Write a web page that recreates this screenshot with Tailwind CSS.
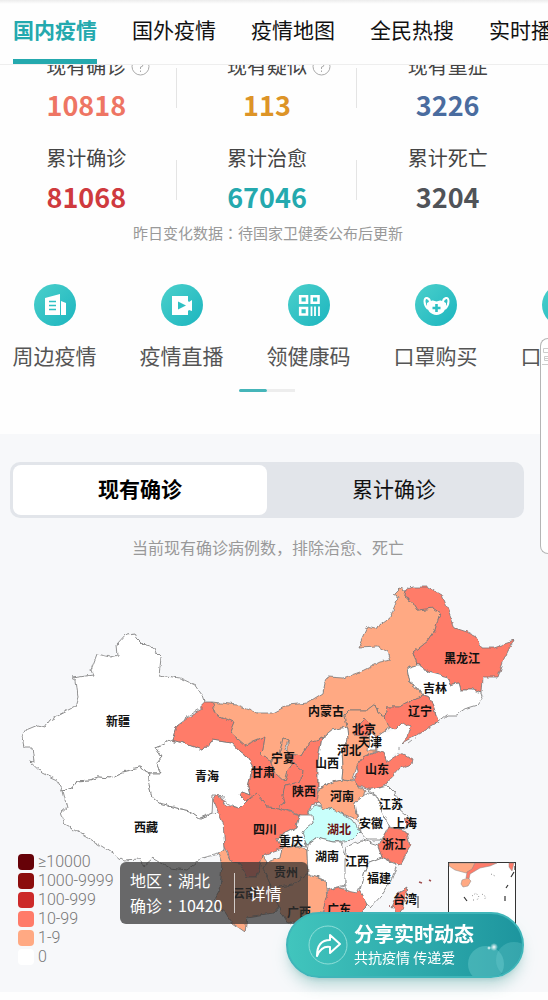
<!DOCTYPE html>
<html lang="zh-CN">

<head>
    <meta charset="UTF-8">
    <meta name="viewport" content="width=device-width, initial-scale=1.0">
    <title>国内疫情</title>
    <script src="https://cdn.jsdelivr.net/npm/@tailwindcss/browser@4"></script>
</head>

<body class="relative min-h-screen overflow-x-hidden bg-[#fefefe] font-['Noto_Sans_CJK_SC',sans-serif]">

    <!-- top tabs -->
    <header class="relative z-10 overflow-hidden border-b border-[#eeeeee] bg-[#fefefe]">
        <div class="h-1 bg-linear-to-b from-[#ececec] to-[#fefefe]"></div>
        <nav class="flex gap-[35px] whitespace-nowrap pl-[13px] text-[21px] text-[#111111]">
            <a href="#" class="flex h-[60px] items-center border-b-[5px] border-[#24a9ae] pb-1 font-bold text-[#24a9ae]">国内疫情</a>
            <a href="#" class="flex h-[60px] items-center pb-[9px]">国外疫情</a>
            <a href="#" class="flex h-[60px] items-center pb-[9px]">疫情地图</a>
            <a href="#" class="flex h-[60px] items-center pb-[9px]">全民热搜</a>
            <a href="#" class="flex h-[60px] items-center pb-[9px]">实时播报</a>
        </nav>
    </header>

    <main>
        <!-- numbers -->
        <section class="-mt-[13px]">
            <div class="-ml-1 mr-[10px] grid grid-cols-3 gap-y-5 text-center text-[20px] text-[#444444]">
                <div class="flex h-[72px] flex-col items-center">
                    <div class="relative leading-7">现有确诊
                        <svg class="absolute -right-6 top-[5px] size-[19px]" viewBox="0 0 19 19" fill="none" stroke="#aaaaaa"><circle cx="9.5" cy="9.5" r="8.5" /><path d="M7 7.500a2.500 2.500 0 1 1 2.500 2.500v2M9.500 13.500v1.500" /></svg>
                    </div>
                    <div class="text-[27px] font-bold leading-[50px] text-[#ee7563]">10818</div>
                </div>
                <div class="relative flex h-[72px] flex-col items-center">
                    <div class="absolute -left-px top-4 h-10 w-px bg-[#e4e4e4]"></div>
                    <div class="relative leading-7">现有疑似
                        <svg class="absolute -right-6 top-[5px] size-[19px]" viewBox="0 0 19 19" fill="none" stroke="#aaaaaa"><circle cx="9.5" cy="9.5" r="8.5" /><path d="M7 7.500a2.500 2.500 0 1 1 2.500 2.500v2M9.500 13.500v1.500" /></svg>
                    </div>
                    <div class="text-[27px] font-bold leading-[50px] text-[#dd9427]">113</div>
                </div>
                <div class="relative flex h-[72px] flex-col items-center">
                    <div class="absolute -left-px top-4 h-10 w-px bg-[#e4e4e4]"></div>
                    <div class="leading-7">现有重症</div>
                    <div class="text-[27px] font-bold leading-[50px] text-[#4a6c9f]">3226</div>
                </div>
                <div class="flex h-[72px] flex-col items-center">
                    <div class="leading-7">累计确诊</div>
                    <div class="text-[27px] font-bold leading-[50px] text-[#cf3a3e]">81068</div>
                </div>
                <div class="relative flex h-[72px] flex-col items-center">
                    <div class="absolute -left-px top-4 h-10 w-px bg-[#e4e4e4]"></div>
                    <div class="leading-7">累计治愈</div>
                    <div class="text-[27px] font-bold leading-[50px] text-[#24a9ae]">67046</div>
                </div>
                <div class="relative flex h-[72px] flex-col items-center">
                    <div class="absolute -left-px top-4 h-10 w-px bg-[#e4e4e4]"></div>
                    <div class="leading-7">累计死亡</div>
                    <div class="text-[27px] font-bold leading-[50px] text-[#505358]">3204</div>
                </div>
            </div>
            <p class="mr-3 mt-[5px] text-center text-[15px] leading-6 text-[#999999]">昨日变化数据<span class="font-['Noto_Sans_CJK_TC',sans-serif]" lang="zh-TW">：</span>待国家卫健委公布后更新</p>
        </section>

        <!-- shortcuts -->
        <section class="mt-[39px] overflow-hidden">
            <div class="flex gap-[42px] whitespace-nowrap pl-3 text-[21px] text-[#555555]">
                <a href="#" class="flex w-[85px] shrink-0 flex-col items-center gap-[13px]">
                    <svg class="size-[42px]" viewBox="0 0 42 42">
                        <defs>
                            <linearGradient id="teal" x1="0" y1="0" x2="1" y2="1">
                                <stop offset="0" stop-color="#4bd0cb" />
                                <stop offset="1" stop-color="#1cb5bf" />
                            </linearGradient>
                        </defs>
                        <circle cx="21" cy="21" r="21" fill="url(#teal)" />
                        <path d="M11 14l15-4v21H11zM27 17l5 2v12h-5z" fill="#fff" />
                        <path d="M15 17.500h7M15 21.500h7M15 25.500h7" stroke="#2fc0c3" stroke-width="1.500" />
                    </svg>
                    <span class="leading-8">周边疫情</span>
                </a>
                <a href="#" class="flex w-[85px] shrink-0 flex-col items-center gap-[13px]">
                    <svg class="size-[42px]" viewBox="0 0 42 42">
                        <circle cx="21" cy="21" r="21" fill="url(#teal)" />
                        <path d="M11 12h16v5l1 1 3-2v11l-3-1-1 1v4H11z" fill="#fff" />
                        <path d="M17 17.500l8 4-8 4z" fill="#2fc0c3" />
                    </svg>
                    <span class="leading-8">疫情直播</span>
                </a>
                <a href="#" class="flex w-[85px] shrink-0 flex-col items-center gap-[13px]">
                    <svg class="size-[42px]" viewBox="0 0 42 42" fill="none" stroke="#fff">
                        <circle cx="21" cy="21" r="21" fill="url(#teal)" stroke="none" />
                        <path d="M12.200 12.200h6.800v6.500h-6.800zM23.700 12.200h6.800v6.500h-6.800zM12.200 24h6.800v6.500h-6.800z" stroke-width="2.600" />
                        <path d="M23.500 22.500v9.500M27 22.500v9.500M31 22.500v9.500" stroke-width="1.800" />
                    </svg>
                    <span class="leading-8">领健康码</span>
                </a>
                <a href="#" class="flex w-[85px] shrink-0 flex-col items-center gap-[13px]">
                    <svg class="size-[42px]" viewBox="0 0 42 42">
                        <circle cx="21" cy="21" r="21" fill="url(#teal)" />
                        <path d="M13 25c-5-5-4-12-1-11 3 1 3 3 3 4M30 25c5-5 4-12 1-11-3 1-3 3-3 4" fill="none" stroke="#fff" stroke-width="2" />
                        <path d="M12 19q4-3 6-2.500l3.500 1 3.500-1q2-.5 6 2.500c1 7-4 12-9.500 12S11 26 12 19z" fill="#fff" />
                        <path d="M21.500 20v8M17.500 24h8" stroke="#2fc0c3" stroke-width="2.600" />
                    </svg>
                    <span class="leading-8">口罩购买</span>
                </a>
                <a href="#" class="flex w-[85px] shrink-0 flex-col items-center gap-[13px]">
                    <svg class="size-[42px]" viewBox="0 0 42 42"><circle cx="21" cy="21" r="21" fill="url(#teal)" /></svg>
                    <span class="leading-8">口罩预约</span>
                </a>
            </div>
            <div class="mr-[14px] mt-[18px] flex justify-center">
                <span class="h-[3px] w-7 rounded-full bg-[#45b5b9]"></span>
                <span class="h-[3px] w-7 bg-[#ededed]"></span>
            </div>
        </section>

        <!-- map -->
        <section class="mt-[42px] bg-[#f7f8fa] pt-7">
            <div class="ml-[10px] mr-6 grid grid-cols-2 rounded-[10px] bg-[#e2e5ea] p-[3px] text-[21px] text-[#111111]">
                <button class="h-[50px] rounded-lg bg-white pb-0.5 font-bold text-black">现有确诊</button>
                <button class="h-[50px] pb-0.5">累计确诊</button>
            </div>
            <p class="mb-px mr-3 mt-[17px] text-center text-[16px] leading-6 text-[#999999]">当前现有确诊病例数，排除治愈、死亡</p>

            <div class="relative">
                <svg class="block w-full" viewBox="0 560 548 432">
                    <defs>
                        <filter id="rough" x="0" y="0" width="1" height="1">
                            <feTurbulence type="fractalNoise" baseFrequency="0.140" numOctaves="2" seed="4" />
                            <feDisplacementMap in="SourceGraphic" scale="5" xChannelSelector="R" yChannelSelector="G" />
                        </filter>
                    </defs>
                    <g filter="url(#rough)" stroke="#777777" stroke-width="0.800" stroke-linejoin="round" fill="#fff">
                        <rect x="0" y="560" width="548" height="432" fill="none" stroke="none" />
                        <!-- Bohai -->
                        <path stroke="none" d="M376 738L385 733 395 730 403 722 410 727 407 737 401 743 397 752 387 762 383 753 376 751z" />
                        <!-- Xinjiang -->
                        <path d="M127 634L135 633 137 638 145 646 154 648 156 653 161 658 160 667 159 675 180 678 195 685 202 695 204 701 202 708 190 715 177 725 172 741 155 747 162 757 157 763 162 773 149 773 140 768 123 772 110 778 98 777 90 780 77 781 72 788 63 791 57 780 42 773 29 761 34 762 32 747 24 747 22 737 26 730 38 725 45 727 50 720 75 707 78 697 76 680 72 678 93 675 91 670 97 654 110 657 118 655 117 645z" />
                        <!-- Xizang -->
                        <path d="M63 791L72 788 77 781 90 780 98 777 110 778 123 772 140 768 149 773 148 780 152 797 160 804 177 808 190 811 200 818 212 813 220 812 225 820 225 850 215 855 202 858 187 870 170 868 153 858 143 867 140 859 123 860 103 847 87 837 65 825 61 812 67 807z" />
                        <!-- Qinghai -->
                        <path d="M172 740L183 743 203 750 212 740 232 743 240 752 248 758 253 767 248 787 250 795 242 792 248 803 242 810 227 803 220 795 213 795 212 813 200 818 190 811 177 808 160 804 152 797 148 780 149 773 162 773 157 763 162 757 155 747z" />
                        <!-- Gansu -->
                        <path fill="#ff7b69" d="M202 702L212 702 217 715 234 722 230 732 245 745 265 737 263 750 260 753 270 760 275 773 285 782 288 770 293 763 302 770 301 782 285 785 283 795 285 803 278 808 267 807 257 793 248 803 240 795 242 792 250 795 248 787 253 767 248 758 240 752 232 743 212 740 203 750 183 743 172 740 177 725 193 715 202 710z" />
                        <!-- Nei Mongol -->
                        <path fill="#ffa983" d="M212 702L237 705 257 713 272 713 287 705 307 703 323 693 325 683 328 677 343 678 360 672 380 662 391 660 388 652 377 646 358 647 367 627 375 629 390 618 393 610 398 598 393 595 400 588 405 590 404 597 413 602 418 610 433 608 440 613 435 630 428 640 413 652 417 665 407 668 410 683 418 688 423 695 400 707 387 707 385 717 378 713 375 704 367 710 350 710 345 715 347 727 332 730 322 738 310 742 302 755 288 753 288 740 283 738 280 752 270 760 260 753 263 750 265 737 245 745 230 732 234 722 217 715z" />
                        <!-- Ningxia -->
                        <path fill="#ffa983" d="M283 738L288 740 285 750 288 753 293 763 288 770 285 782 275 773 270 760 280 752z" />
                        <!-- Shaanxi -->
                        <path fill="#ff7b69" d="M322 737L318 760 318 787 320 803 310 805 308 818 293 812 278 808 285 803 283 795 285 785 301 782 302 770 293 763 288 753 302 755 310 742z" />
                        <!-- Shanxi -->
                        <path d="M322 738L332 730 347 727 348 740 342 750 343 767 342 780 333 782 320 788 318 787 318 760z" />
                        <!-- Hebei -->
                        <path fill="#ffa983" d="M345 715L350 710 367 710 375 704 378 713 385 717 390 727 382 733 376 738 377 750 363 757 357 765 353 781 342 780 343 767 342 750 348 740 347 727z" />
                        <path fill="#ff7b69" d="M365 719L372 727 367 737 355 735 357 727z" />
                        <path d="M370 732L377 737 375 750 368 750z" />
                        <!-- Heilongjiang -->
                        <path fill="#ff7b69" d="M405 590L413 587 428 587 442 595 447 607 455 628 467 632 477 637 482 648 493 648 513 641 505 657 498 677 483 677 482 693 472 690 460 690 458 683 450 685 447 677 428 672 422 665 417 665 413 652 428 640 435 630 440 613 433 608 418 610 413 602 404 597z" />
                        <!-- Jilin -->
                        <path d="M407 668L417 665 422 665 428 672 447 677 450 685 458 683 460 690 472 690 482 693 483 697 477 705 467 708 457 715 447 715 438 722 430 697 423 695 418 688 410 683z" />
                        <!-- Liaoning -->
                        <path fill="#ff7b69" d="M387 707L400 707 423 695 430 697 438 722 420 733 402 743 407 737 410 727 403 722 395 730 388 726 385 717z" />
                        <!-- Shandong -->
                        <path fill="#ff7b69" d="M363 757L377 751 384 753 387 762 400 753 413 760 412 764 400 768 387 783 372 790 353 783 358 772 357 765z" />
                        <!-- Henan -->
                        <path fill="#ffa983" d="M333 782L342 780 353 782 365 790 363 798 355 803 358 820 340 812 323 808 317 800 320 788z" />
                        <!-- Hubei -->
                        <path fill="#c9fffb" d="M315 805L325 808 340 812 352 820 360 832 352 840 333 842 317 838 307 845 300 832 313 823 309 812z" />
                        <!-- Sichuan -->
                        <path fill="#ff7b69" d="M218 793L225 805 240 808 250 798 257 793 267 807 278 808 300 815 297 827 278 837 282 848 263 855 257 877 247 877 240 863 232 862 225 847 223 823 213 800z" />
                        <!-- Chongqing -->
                        <path d="M300 815L312 815 313 823 302 832 307 847 295 845 280 847 277 838 297 827z" />
                        <!-- Yunnan -->
                        <path fill="#ffa983" d="M225 850L232 862 240 863 247 877 257 877 263 855 268 862 263 868 272 888 282 903 273 913 247 917 245 932 232 923 225 912 213 903 220 890 222 863 218 853z" />
                        <!-- Guizhou -->
                        <path fill="#ffa983" d="M280 858L282 848 297 846 307 850 308 873 293 885 272 888 263 868 268 862z" />
                        <!-- Guangxi -->
                        <path fill="#ffa983" d="M272 888L293 885 308 873 317 878 325 880 327 897 323 910 310 920 288 923 280 910z" />
                        <!-- Guangdong -->
                        <path fill="#ff7b69" d="M328 890L340 887 367 893 368 905 360 913 333 927 323 925 323 910z" />
                        <!-- Hunan -->
                        <path d="M308 845L317 838 333 842 342 842 346 860 345 885 327 890 325 880 308 875 307 852z" />
                        <!-- Jiangxi -->
                        <path d="M347 847L363 840 378 845 382 857 367 863 362 883 357 893 347 891 345 883 345 860z" />
                        <!-- Fujian -->
                        <path d="M382 857L397 865 390 883 382 895 370 908 360 890 367 863z" />
                        <!-- Anhui -->
                        <path d="M355 803L368 792 378 798 382 812 390 827 380 840 367 840 360 832 358 820z" />
                        <!-- Jiangsu -->
                        <path d="M368 790L387 785 395 793 400 810 412 820 405 829 390 827 382 812 378 798z" />
                        <!-- Zhejiang -->
                        <path fill="#ff7b69" d="M378 847L388 827 407 832 410 847 400 865 382 857z" />
                        <path fill="#ff7b69" d="M403 818L412 820 407 828z" />
                        <!-- Taiwan -->
                        <path fill="#ff7b69" d="M407 888L403 907 398 914 392 907 398 893z" />
                    </g>
                    <path d="M419 882l3 1M429 880l2 1M389 906h1" stroke="#a05050" stroke-width="1.500" />
                    <path d="M408 743l4-3M415 738h1M399 747v3M398 753v1" stroke="#888888" stroke-width="0.800" />

                    <!-- South China Sea inset -->
                    <g stroke="#888888" stroke-width="0.500">
                        <rect x="448.500" y="862.500" width="67" height="68" fill="#fff" stroke="#333333" stroke-width="1" />
                        <path fill="#ffa983" d="M449 863H475L472 870 466 873 455 870 449 866z" />
                        <path fill="#ff7b69" d="M475 863H497L490 866 480 868 470 874 469 879 466 878 467 872 472 869z" />
                        <path fill="#ffa983" d="M462 880l6-2 3 3-3 5-5 1-2-3z" />
                        <path fill="#ff7b69" d="M509 863h5l-2 8-3-4z" />
                    </g>
                    <path d="M464 897l3 4M514 872l-3 5M508 885l-2 3M505 896v5M515 866v4" fill="none" stroke="#333333" stroke-width="1.200" />
                    <path d="M472 896l4-3 3 4-2 3M482 894l4 3-2 3M473 900h1M491 874l4 2" fill="none" stroke="#888888" stroke-dasharray="1 2" />

                    <g class="text-[12px] font-bold" text-anchor="middle" fill="#111111">
                        <text x="118" y="726">新疆</text>
                        <text x="146" y="832">西藏</text>
                        <text x="207" y="781">青海</text>
                        <text x="263" y="777">甘肃</text>
                        <text x="326" y="716">内蒙古</text>
                        <text x="283" y="763">宁夏</text>
                        <text x="304" y="796">陕西</text>
                        <text x="327" y="768">山西</text>
                        <text x="349" y="755">河北</text>
                        <text x="364" y="734">北京</text>
                        <text x="370" y="747">天津</text>
                        <text x="462" y="663">黑龙江</text>
                        <text x="435" y="693">吉林</text>
                        <text x="420" y="716">辽宁</text>
                        <text x="377" y="774">山东</text>
                        <text x="342" y="801">河南</text>
                        <text x="339" y="834" fill="#6b1414">湖北</text>
                        <text x="265" y="834">四川</text>
                        <text x="291" y="846">重庆</text>
                        <text x="286" y="877">贵州</text>
                        <text x="245" y="898">云南</text>
                        <text x="299" y="917">广西</text>
                        <text x="339" y="914">广东</text>
                        <text x="327" y="861">湖南</text>
                        <text x="357" y="866">江西</text>
                        <text x="379" y="883">福建</text>
                        <text x="371" y="828">安徽</text>
                        <text x="391" y="809">江苏</text>
                        <text x="405" y="828">上海</text>
                        <text x="394" y="849">浙江</text>
                        <text x="405" y="904">台湾</text>
                    </g>
                    <path d="M418 896v12" stroke="#333333" />
                </svg>

                <!-- legend -->
                <ul class="absolute bottom-[27px] left-[18px] flex flex-col gap-[3px] font-[Roboto,sans-serif] text-[16px] font-light leading-4 text-[#777777]">
                    <li class="flex gap-1"><span class="size-4 rounded bg-[#660208]"></span>≥10000</li>
                    <li class="flex gap-1"><span class="size-4 rounded bg-[#8c0d0d]"></span>1000-9999</li>
                    <li class="flex gap-1"><span class="size-4 rounded bg-[#cc2929]"></span>100-999</li>
                    <li class="flex gap-1"><span class="size-4 rounded bg-[#ff7b69]"></span>10-99</li>
                    <li class="flex gap-1"><span class="size-4 rounded bg-[#ffa983]"></span>1-9</li>
                    <li class="flex gap-1"><span class="size-4 rounded bg-white"></span>0</li>
                </ul>

                <!-- selected region -->
                <div class="absolute left-[120px] top-[302px] flex h-[62px] w-[188px] items-center rounded-md bg-[#303030]/72 pl-[10px] text-[16px] leading-[25px] text-white">
                    <div>
                        <div>地区<span class="font-['Noto_Sans_CJK_TC',sans-serif]" lang="zh-TW">：</span>湖北</div>
                        <div>确诊<span class="font-['Noto_Sans_CJK_TC',sans-serif]" lang="zh-TW">：</span>10420</div>
                    </div>
                    <a href="#" class="ml-3 flex h-10 items-center border-l border-white/70 pl-[14px]">详情</a>
                </div>
            </div>
        </section>
    </main>

    <!-- floating side panel -->
    <aside class="absolute right-0 top-[338px] h-[216px] w-2 overflow-hidden rounded-l-lg border border-r-0 border-[#b5b5b5] bg-white">
        <svg class="mt-2 h-[18px] w-[7px]" viewBox="0 0 7 18" fill="none" stroke="#cccccc"><path d="M8 1.500H2.500v4H8M8 9.500H3.500v4H8M4 11.500h3M1 17.500h7" /></svg>
    </aside>

    <!-- share -->
    <button class="fixed bottom-[22px] right-6 flex h-[66px] w-[238px] items-center gap-1.5 overflow-hidden rounded-full border-2 border-[#3fb5b9] bg-linear-to-r from-[#41c5bd] to-[#1d959e] pl-5 text-left text-white shadow-lg shadow-teal-700/25">
        <svg class="size-10 shrink-0" viewBox="0 0 40 40" fill="none" stroke="#fff">
            <circle cx="20" cy="20" r="19" stroke="#8fded8" />
            <path d="M9 31C9 20 14 15 22 15V10L32 19 22 28V22C16 21 12 24 9 31z" stroke-width="2" stroke-linejoin="round" />
        </svg>
        <span class="flex flex-col">
            <span class="text-[20px] font-bold leading-6">分享实时动态</span>
            <span class="text-[14px] leading-[22px]">共抗疫情 传递爱</span>
        </span>
        <svg class="absolute bottom-0 right-0 h-9 w-14" viewBox="0 0 56 36">
            <defs>
                <radialGradient id="glow">
                    <stop offset="0" stop-color="#fff" />
                    <stop offset="1" stop-color="#fff" stop-opacity="0" />
                </radialGradient>
            </defs>
            <circle cx="20" cy="24" r="18" fill="#7fd6d6" fill-opacity="0.350" />
            <circle cx="48" cy="20" r="18" fill="#7fd6d6" fill-opacity="0.250" />
            <circle cx="28" cy="7" r="4" fill="url(#glow)" />
            <circle cx="23" cy="8" r="2" fill="url(#glow)" />
        </svg>
    </button>

</body>

</html>
